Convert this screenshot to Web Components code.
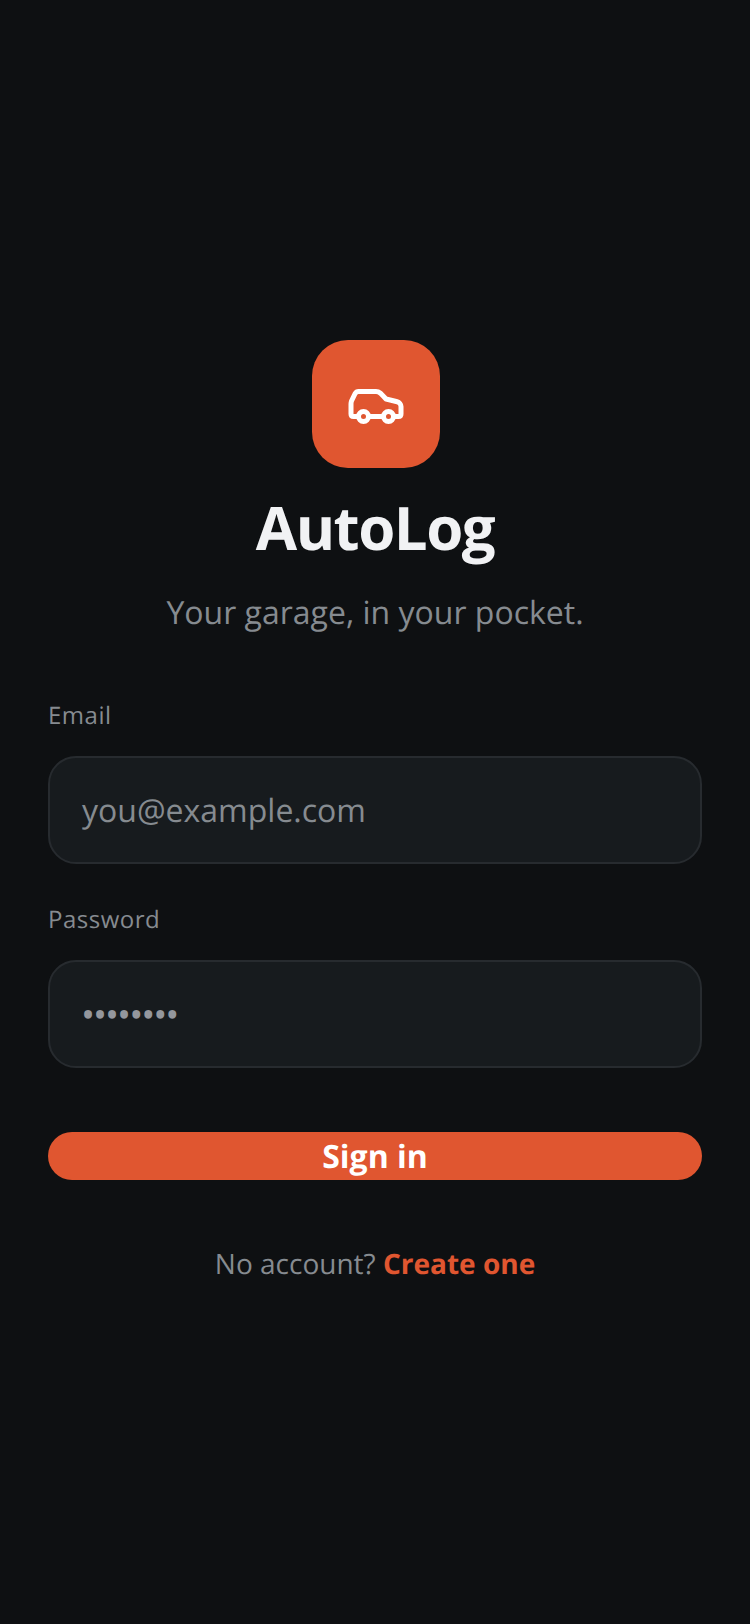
<!DOCTYPE html>
<html lang="en">
<head>
  <meta charset="UTF-8">
  <title>AutoLog</title>
  <style>
    html, body { margin: 0; height: 100%; background: #0e1012; }
    body { font-family: "Open Sans", sans-serif; text-rendering: geometricPrecision; }
    login-screen b { color: #e05630; font-weight: 700; }
  </style>
</head>
<body>

<login-screen>
  <brand-header slot="header" name="AutoLog" tagline="Your garage, in your pocket."></brand-header>
  <form-field label="Email" placeholder="you@example.com"></form-field>
  <form-field label="Password" placeholder="••••••••" secret></form-field>
  <primary-button slot="action">Sign in</primary-button>
  <span slot="footer">No account? <b>Create one</b></span>
</login-screen>

<script>
class LoginScreen extends HTMLElement {
  constructor() {
    super();
    this.attachShadow({mode: 'open'});
    this.shadowRoot.innerHTML = `
      <style>
        :host {
          display: flex;
          flex-direction: column;
          box-sizing: border-box;
          height: 1624px;
          padding: 340px 48px 0;
          background: #0e1012;
          opacity: 0.999; /* greyscale text edges */
        }
        .fields { display: flex; flex-direction: column; gap: 40px; margin-top: 65px; }
        .action { margin-top: 64px; }
        .footer {
          margin-top: 64px;
          text-align: center;
          font-size: 28px;
          line-height: 40px;
          color: #868b90;
        }
        ::slotted(span) { display: block; }
      </style>
      <slot name="header"></slot>
      <div class="fields"><slot></slot></div>
      <div class="action"><slot name="action"></slot></div>
      <div class="footer"><slot name="footer"></slot></div>
    `;
  }
}
customElements.define('login-screen', LoginScreen);

class BrandHeader extends HTMLElement {
  constructor() {
    super();
    this.attachShadow({mode: 'open'});
  }
  connectedCallback() {
    this.shadowRoot.innerHTML = `
      <style>
        :host { display: flex; flex-direction: column; align-items: center; }
        .logo {
          width: 128px;
          height: 128px;
          margin-left: 2px;
          border-radius: 36px;
          background: #e05630;
          display: flex;
          align-items: center;
          justify-content: center;
        }
        h1 {
          margin: 23px 0 0;
          font-size: 60px;
          line-height: 72px;
          font-weight: 700;
          letter-spacing: -1.5px;
          color: #f1f2f4;
        }
        p {
          margin: 28px 0 0;
          font-size: 32px;
          line-height: 44px;
          color: #868b90;
        }
      </style>
      <div class="logo">
        <svg width="60" height="60" viewBox="0 0 24 24" fill="none" stroke="#fff" stroke-width="2" stroke-linecap="round" stroke-linejoin="round">
          <path d="M19 17h2c.6 0 1-.4 1-1v-3c0-.9-.7-1.7-1.5-1.9C18.7 10.6 16 10 16 10s-1.3-1.4-2.2-2.3c-.5-.4-1.1-.7-1.8-.7H5c-.6 0-1.1.4-1.4.9l-1.4 2.9A3.7 3.7 0 0 0 2 12v4c0 .6.4 1 1 1h2"/>
          <circle cx="7" cy="17" r="2"/>
          <path d="M9 17h6"/>
          <circle cx="17" cy="17" r="2"/>
        </svg>
      </div>
      <h1>${this.getAttribute('name')}</h1>
      <p>${this.getAttribute('tagline')}</p>
    `;
  }
}
customElements.define('brand-header', BrandHeader);

class FormField extends HTMLElement {
  constructor() {
    super();
    this.attachShadow({mode: 'open'});
  }
  connectedCallback() {
    const secret = this.hasAttribute('secret');
    this.shadowRoot.innerHTML = `
      <style>
        :host { display: block; }
        label {
          display: block;
          font-size: 24px;
          line-height: 32px;
          letter-spacing: 0.5px;
          color: #868b90;
        }
        .box {
          box-sizing: border-box;
          height: 108px;
          margin-top: 24px;
          padding: 0 32px;
          display: flex;
          align-items: center;
          background: #171b1e;
          border: 2px solid #272b2f;
          border-radius: 28px;
          font-size: 32px;
          color: #868b90;
        }
        .secret { font-weight: 600; color: #94979d; }
      </style>
      <label>${this.getAttribute('label')}</label>
      <div class="box"><span class="${secret ? 'secret' : ''}">${this.getAttribute('placeholder')}</span></div>
    `;
  }
}
customElements.define('form-field', FormField);

class PrimaryButton extends HTMLElement {
  constructor() {
    super();
    this.attachShadow({mode: 'open'});
    this.shadowRoot.innerHTML = `
      <style>
        :host {
          display: flex;
          align-items: center;
          justify-content: center;
          height: 48px;
          border-radius: 24px;
          background: #e05630;
          color: #fff;
          font-size: 32px;
          font-weight: 700;
        }
      </style>
      <slot></slot>
    `;
  }
}
customElements.define('primary-button', PrimaryButton);
</script>
</body>
</html>
